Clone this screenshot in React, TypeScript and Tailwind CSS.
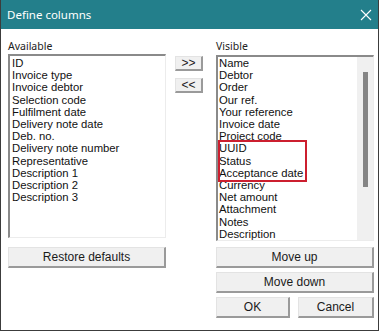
const available = [
  "ID",
  "Invoice type",
  "Invoice debtor",
  "Selection code",
  "Fulfilment date",
  "Delivery note date",
  "Deb. no.",
  "Delivery note number",
  "Representative",
  "Description 1",
  "Description 2",
  "Description 3",
];

const visible = [
  "Name",
  "Debtor",
  "Order",
  "Our ref.",
  "Your reference",
  "Invoice date",
  "Project code",
  "UUID",
  "Status",
  "Acceptance date",
  "Currency",
  "Net amount",
  "Attachment",
  "Notes",
  "Description",
];

const listFont = { fontFamily: '"Liberation Sans", Arial, sans-serif' };
const uiFont = { fontFamily: '"Noto Sans", "Open Sans", sans-serif' };

function Button({ label, className }: { label: string; className: string }) {
  return (
    <div
      className={`flex items-center justify-center bg-[#f0f0f0] border-t border-l border-[#e3e3e3] border-r-2 border-b-2 border-r-[#9a9a9a] border-b-[#9a9a9a] text-[12px] text-[#1a1a1a] ${className}`}
      style={listFont}
    >
      {label}
    </div>
  );
}

export default function App() {
  return (
    <div className="w-[380px] h-[332px] bg-white">
      <div className="w-[379px] h-[331px] border border-[#3c3c3c] border-t-0 flex flex-col">
        <div className="h-[29px] bg-[#237f8b] flex items-center justify-between pl-[6px] pr-[5px]">
          <span className="text-white text-[11.5px] leading-none" style={uiFont}>
            Define columns
          </span>
          <svg width="12" height="12" viewBox="0 0 12 12" className="mr-[1px]">
            <path d="M1 1L11 11M11 1L1 11" stroke="white" strokeWidth="1.1" fill="none" />
          </svg>
        </div>

        <div className="flex pl-[7px] pt-[9px]">
          <div className="w-[158px] flex flex-col">
            <div className="text-[10.5px] leading-[16px] text-[#222] h-[16px]" style={uiFont}>
              Available
            </div>
            <div
              className="h-[184px] bg-white border-t-2 border-l-2 border-t-[#8a8a8a] border-l-[#8a8a8a] border-r border-b border-[#ececec] pt-[1px] pl-[2px]"
              style={listFont}
            >
              {available.map((item) => (
                <div key={item} className="text-[11.3px] leading-[12.2px] text-[#111]">
                  {item}
                </div>
              ))}
            </div>
            <Button label="Restore defaults" className="mt-[9px] h-[21px]" />
          </div>

          <div className="w-[50px] flex flex-col pl-[9px] pt-[18px] gap-[7px]">
            <Button label=">>" className="w-[28px] h-[15px] text-[10px]" />
            <Button label="<<" className="w-[28px] h-[15px] text-[10px]" />
          </div>

          <div className="w-[158px] flex flex-col">
            <div className="text-[10.5px] leading-[16px] text-[#222] h-[17px]" style={uiFont}>
              Visible
            </div>
            <div
              className="relative h-[186px] bg-white border-t-2 border-l-2 border-t-[#8a8a8a] border-l-[#8a8a8a] border-r border-b border-[#ececec] flex"
              style={listFont}
            >
              <div className="flex-1 pl-[1px] overflow-hidden">
                {visible.map((item) => (
                  <div key={item} className="text-[11.3px] leading-[12.2px] text-[#111] whitespace-nowrap">
                    {item}
                  </div>
                ))}
              </div>
              <div className="w-[16px] bg-[#f0f0f0] flex justify-center pt-[15px]">
                <div className="w-[5px] h-[115px] bg-[#858585]" />
              </div>
              <div className="absolute left-[0px] top-[83px] w-[89px] h-[42px] border-2 border-[#cc1f2f]" />
            </div>
            <Button label="Move up" className="mt-[6px] h-[21px]" />
            <Button label="Move down" className="mt-[4px] h-[21px]" />
            <div className="flex justify-between mt-[4px]">
              <Button label="OK" className="w-[74px] h-[21px]" />
              <Button label="Cancel" className="w-[76px] h-[21px]" />
            </div>
          </div>
        </div>
      </div>
    </div>
  );
}
